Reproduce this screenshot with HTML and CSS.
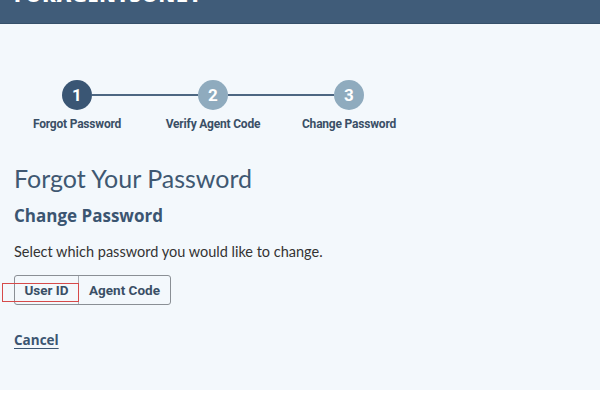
FILE: index.html
```html
<!DOCTYPE html>
<html>
<head>
<meta charset="utf-8">
<link rel="stylesheet" href="styles.css">
</head>
<body>
<header class="topbar">
  <div class="brand">FORAGENTSONLY</div>
</header>
<main class="content">
  <div class="stepper">
    <div class="step">
      <div class="circle active">1</div>
      <div class="label">Forgot Password</div>
    </div>
    <div class="line"></div>
    <div class="step">
      <div class="circle">2</div>
      <div class="label">Verify Agent Code</div>
    </div>
    <div class="line"></div>
    <div class="step">
      <div class="circle">3</div>
      <div class="label">Change Password</div>
    </div>
  </div>
  <h1 class="title">Forgot Your Password</h1>
  <h2 class="subtitle">Change Password</h2>
  <p class="desc">Select which password you would like to change.</p>
  <div class="btn-group">
    <button class="btn first">User ID</button>
    <button class="btn">Agent Code</button>
    <span class="focus-mark"></span>
  </div>
  <a class="cancel" href="#">Cancel</a>
</main>
</body>
</html>
```
FILE: styles.css
```css
html, body {
  margin: 0;
  padding: 0;
  background: #ffffff;
}
body {
  width: 600px;
  height: 400px;
  overflow: hidden;
  font-family: Lato, "Open Sans", sans-serif;
}
.topbar {
  height: 23px;
  background: #405c79;
  border-bottom: 1px solid #36506a;
  overflow: hidden;
}
.brand {
  color: #ffffff;
  font-family: "Open Sans", sans-serif;
  font-weight: 800;
  font-size: 20px;
  letter-spacing: 0.8px;
  line-height: 26px;
  margin-top: -18px;
  padding-left: 14px;
  white-space: nowrap;
}
.content {
  background: #f3f8fc;
  height: 366px;
  padding: 0 14px;
  box-sizing: border-box;
  overflow: hidden;
}
.stepper {
  display: flex;
  align-items: flex-start;
  padding-top: 56px;
  padding-left: 48px;
}
.step {
  display: flex;
  flex-direction: column;
  align-items: center;
  width: 30px;
}
.circle {
  width: 30px;
  height: 30px;
  border-radius: 50%;
  background: #8fabbe;
  color: #ffffff;
  font-family: Roboto, sans-serif;
  font-weight: 700;
  font-size: 17px;
  line-height: 30px;
  text-align: center;
}
.circle.active {
  background: #3a5674;
}
.label {
  white-space: nowrap;
  font-family: Roboto, sans-serif;
  font-weight: 700;
  font-size: 12px;
  letter-spacing: -0.2px;
  color: #3a4f66;
  margin-top: 7px;
}
.line {
  width: 106px;
  height: 2px;
  background: #4d6782;
  margin-top: 14px;
}
.title {
  margin: 32px 0 0 0;
  font-family: Lato, sans-serif;
  font-weight: 400;
  font-size: 25px;
  line-height: 30px;
  color: #3f5872;
}
.subtitle {
  margin: 13px 0 0 0;
  font-family: "Open Sans", sans-serif;
  font-weight: 700;
  font-size: 17px;
  line-height: 20px;
  color: #3b5571;
}
.desc {
  margin: 17px 0 0 0;
  font-family: Lato, sans-serif;
  font-size: 14.5px;
  line-height: 18px;
  color: #333333;
}
.btn-group {
  display: inline-flex;
  margin-top: 14px;
  border: 1px solid #8a8f95;
  border-radius: 3px;
  position: relative;
}
.btn {
  background: transparent;
  border: none;
  font-family: Roboto, sans-serif;
  font-weight: 700;
  font-size: 13.5px;
  color: #3a4f66;
  height: 28px;
  padding: 0;
  white-space: nowrap;
  text-align: center;
}
.btn.first {
  width: 64px;
  border-right: 1px solid #a8adb3;
}
.btn + .btn {
  width: 91px;
}
.focus-mark {
  position: absolute;
  left: -13px;
  top: 7px;
  width: 75px;
  height: 17px;
  border: 1px solid #d64a4a;
}
.cancel {
  display: block;
  width: max-content;
  margin-top: 26px;
  font-family: "Open Sans", sans-serif;
  font-weight: 700;
  font-size: 13.5px;
  color: #3b5571;
  text-decoration: underline;
  text-underline-offset: 3px;
}
```
